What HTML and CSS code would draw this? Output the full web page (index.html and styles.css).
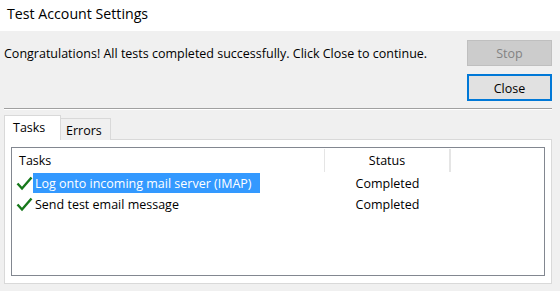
FILE: index.html
```html
<!DOCTYPE html>
<html lang="en">
<head>
  <meta charset="UTF-8">
  <title>Test Account Settings</title>
  <link rel="stylesheet" href="styles.css">
</head>
<body>
  <!-- Title bar -->
  <div class="title-bar">Test Account Settings</div>

  <div class="dialog">
    <!-- Message and buttons -->
    <div class="top">
      <p class="message">Congratulations! All tests completed successfully. Click Close to continue.</p>
      <div class="buttons">
        <button class="btn btn-disabled" disabled>Stop</button>
        <button class="btn btn-default">Close</button>
      </div>
    </div>

    <div class="separator"></div>

    <!-- Tabs -->
    <div class="tabs">
      <div class="tab active">Tasks</div>
      <div class="tab">Errors</div>
    </div>

    <div class="tab-panel">
      <div class="list">
        <div class="list-header">
          <div class="col col-task">Tasks</div>
          <div class="col col-status">Status</div>
          <div class="col col-rest"></div>
        </div>

        <div class="list-row">
          <div class="col col-task">
            <svg class="check" width="17" height="15" viewBox="0 0 17 15">
              <path d="M1.5 7.5 L6 12.5 L15.5 1.5" fill="none" stroke="#17781b" stroke-width="2.4"/>
            </svg>
            <span class="task-name selected">Log onto incoming mail server (IMAP)</span>
          </div>
          <div class="col col-status">Completed</div>
        </div>

        <div class="list-row">
          <div class="col col-task">
            <svg class="check" width="17" height="15" viewBox="0 0 17 15">
              <path d="M1.5 7.5 L6 12.5 L15.5 1.5" fill="none" stroke="#17781b" stroke-width="2.4"/>
            </svg>
            <span class="task-name">Send test email message</span>
          </div>
          <div class="col col-status">Completed</div>
        </div>
      </div>
    </div>
  </div>
</body>
</html>
```

FILE: styles.css
```css
/* General styling */
* {
  margin: 0;
  padding: 0;
  box-sizing: border-box;
}

body {
  font-family: "Open Sans", "Noto Sans", sans-serif;
  font-size: 12.5px;
  color: #000;
  background: #f0f0f0;
  width: 560px;
  height: 291px;
  overflow: hidden;
}

/* Title bar */
.title-bar {
  height: 31px;
  background: #fff;
  padding-left: 7px;
  font-size: 14.2px;
  line-height: 27px;
}

/* Dialog body */
.dialog {
  padding: 0 8px 0 4px;
}

.top {
  display: flex;
  justify-content: space-between;
  padding-top: 9px;
}

.message {
  line-height: 27px;
}

.buttons {
  display: flex;
  flex-direction: column;
  gap: 8px;
}

.btn {
  width: 85px;
  font-family: inherit;
  font-size: 12.5px;
  padding-top: 1px;
}

.btn-disabled {
  height: 26px;
  background: #cccccc;
  border: 1px solid #bfbfbf;
  color: #838383;
}

.btn-default {
  height: 27px;
  background: #e1e1e1;
  border: 2px solid #0078d7;
  color: #000;
}

.separator {
  margin-top: 7px;
  height: 2px;
  border-top: 1px solid #a0a0a0;
  border-bottom: 1px solid #fff;
}

/* Tabs */
.tabs {
  display: flex;
  align-items: flex-end;
  height: 29px;
}

.tab {
  height: 22px;
  padding: 0 5px;
  line-height: 22px;
  background: #f0f0f0;
  border: 1px solid #d9d9d9;
  border-bottom: none;
  margin-bottom: -1px;
}

.tab.active {
  height: 25px;
  width: 57px;
  padding: 0 8px;
  line-height: 23px;
  background: #fff;
  position: relative;
  z-index: 1;
}

.tab + .tab {
  border-left: none;
  width: 50px;
  padding-top: 1px;
}

.tab-panel {
  height: 145px;
  background: #fff;
  border: 1px solid #d9d9d9;
  padding: 7px 6px 7px 6px;
}

/* List view */
.list {
  height: 129px;
  border: 1px solid #828790;
  background: #fff;
}

.list-header {
  display: flex;
  height: 24px;
  padding-top: 1px;
}

.list-header .col {
  border-right: 1px solid #e5e5e5;
  line-height: 24px;
}

.col-task {
  width: 313px;
  padding-left: 7px;
  display: flex;
  align-items: center;
}

.col-status {
  width: 125px;
  text-align: center;
}

.list-row {
  display: flex;
  height: 21px;
  padding-top: 1px;
  line-height: 21px;
}

.list-row .col-task {
  padding-left: 4px;
}

.check {
  flex: none;
}

.task-name {
  padding: 1px 8px 0 2px;
  line-height: 19px;
}

.task-name.selected {
  background: #3399ff;
  color: #fff;
}
```
